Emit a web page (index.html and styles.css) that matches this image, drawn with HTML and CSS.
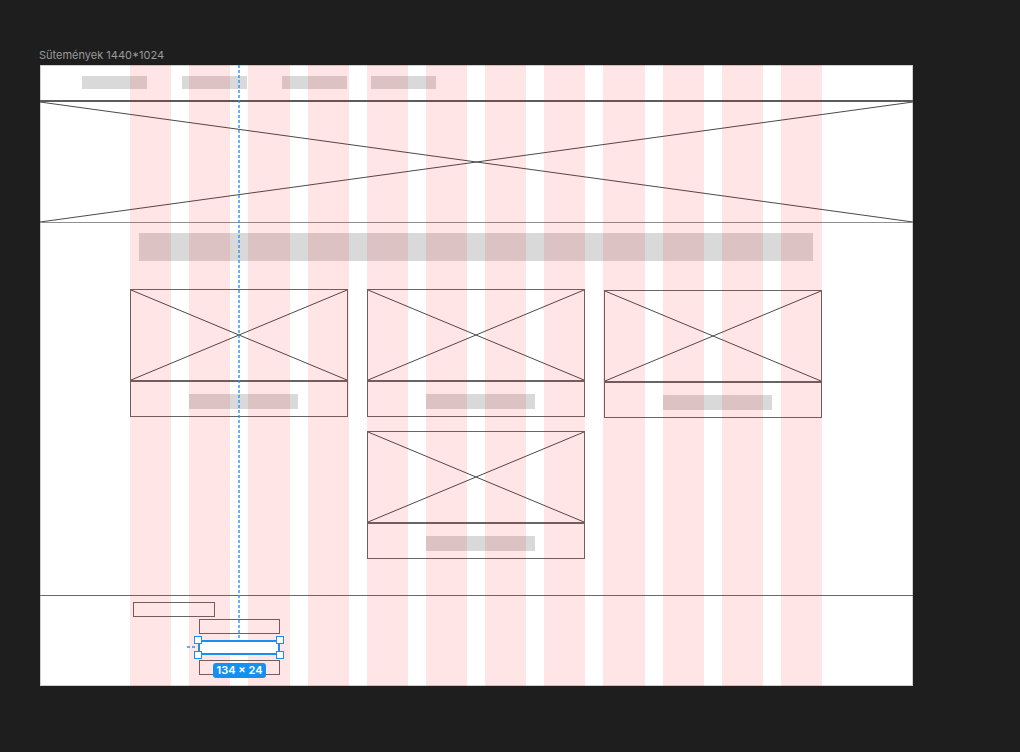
FILE: index.html
```html
<!DOCTYPE html>
<html lang="hu">
<head>
<meta charset="utf-8">
<title>Sütemények</title>
<link rel="stylesheet" href="styles.css">
</head>
<body>
<div class="canvas">
  <div class="frame-label">Sütemények 1440*1024</div>
  <div class="frame">
    <header class="nav">
      <span class="nav-item"></span>
      <span class="nav-item"></span>
      <span class="nav-item"></span>
      <span class="nav-item nav-item-last"></span>
    </header>
    <section class="hero">
      <svg class="xbox" viewBox="0 0 100 100" preserveAspectRatio="none"><line x1="0" y1="0" x2="100" y2="100" vector-effect="non-scaling-stroke"/><line x1="0" y1="100" x2="100" y2="0" vector-effect="non-scaling-stroke"/></svg>
    </section>
    <main class="content">
      <div class="title-bar"></div>
      <div class="cards">
        <div class="card">
          <div class="card-img"><svg class="xbox" viewBox="0 0 100 100" preserveAspectRatio="none"><line x1="0" y1="0" x2="100" y2="100" vector-effect="non-scaling-stroke"/><line x1="0" y1="100" x2="100" y2="0" vector-effect="non-scaling-stroke"/></svg></div>
          <div class="card-caption"><span class="caption-bar"></span></div>
        </div>
        <div class="card">
          <div class="card-img"><svg class="xbox" viewBox="0 0 100 100" preserveAspectRatio="none"><line x1="0" y1="0" x2="100" y2="100" vector-effect="non-scaling-stroke"/><line x1="0" y1="100" x2="100" y2="0" vector-effect="non-scaling-stroke"/></svg></div>
          <div class="card-caption"><span class="caption-bar"></span></div>
        </div>
        <div class="card card-shift">
          <div class="card-img"><svg class="xbox" viewBox="0 0 100 100" preserveAspectRatio="none"><line x1="0" y1="0" x2="100" y2="100" vector-effect="non-scaling-stroke"/><line x1="0" y1="100" x2="100" y2="0" vector-effect="non-scaling-stroke"/></svg></div>
          <div class="card-caption"><span class="caption-bar"></span></div>
        </div>
        <div class="card card-middle">
          <div class="card-img"><svg class="xbox" viewBox="0 0 100 100" preserveAspectRatio="none"><line x1="0" y1="0" x2="100" y2="100" vector-effect="non-scaling-stroke"/><line x1="0" y1="100" x2="100" y2="0" vector-effect="non-scaling-stroke"/></svg></div>
          <div class="card-caption"><span class="caption-bar"></span></div>
        </div>
      </div>
    </main>
    <footer class="footer">
      <span class="f-rect f-rect-1"></span>
      <span class="f-rect f-rect-2"></span>
      <span class="f-rect f-rect-3"></span>
      <span class="f-rect f-rect-4"></span>
    </footer>
    <div class="layout-grid">
      <span></span><span></span><span></span><span></span><span></span><span></span>
      <span></span><span></span><span></span><span></span><span></span><span></span>
    </div>
    <svg class="guide-v" width="2" height="575"><line x1="1" y1="0" x2="1" y2="575"/></svg>
    <svg class="guide-h" width="10" height="2"><line x1="0" y1="1" x2="10" y2="1"/></svg>
    <div class="selection">
      <i class="handle handle-tl"></i><i class="handle handle-tr"></i>
      <i class="handle handle-bl"></i><i class="handle handle-br"></i>
    </div>
    <div class="size-badge">134 × 24</div>
  </div>
</div>
</body>
</html>
```

FILE: styles.css
```css
* { box-sizing: border-box; }
html, body { margin: 0; padding: 0; }
body {
  background: #1e1e1e;
  font-family: Inter, "Noto Sans", "Liberation Sans", sans-serif;
  width: 1020px;
  height: 752px;
  overflow: hidden;
}
.canvas { padding: 48px 0 0 40px; }
.frame-label {
  color: #9a9a9a;
  font-size: 11px;
  line-height: 14px;
  margin: 0 0 3px -1px;
}
.frame {
  position: relative;
  width: 873px;
  height: 621px;
  background: #fff;
  display: flex;
  flex-direction: column;
  box-shadow: inset 0 0 0 1px #cfcfcf;
}
.nav {
  flex-shrink: 0;
  height: 35px;
  display: flex;
  align-items: flex-start;
  gap: 35px;
  padding: 11px 0 0 42px;
}
.nav-item { width: 65px; height: 13px; background: #d9d9d9; }
.nav-item-last { margin-left: -11px; }
.hero {
  flex-shrink: 0;
  height: 123px;
  border-top: 2px solid #5c5c5c;
  border-bottom: 1px solid #909090;
}
.xbox { display: block; width: 100%; height: 100%; }
.xbox line { stroke: #4a4a4a; stroke-width: 1; }
.content { flex: 1; padding-top: 10px; }
.title-bar { width: 674px; height: 28px; margin-left: 99px; background: #d9d9d9; }
.cards {
  display: grid;
  grid-template-columns: repeat(3, 218px);
  column-gap: 19px;
  row-gap: 13px;
  margin: 28px 0 0 90px;
  align-items: start;
}
.card-shift { margin-top: 1px; }
.card-middle { grid-column: 2; }
.card-img { height: 92px; border: 1px solid #666; }
.card-caption {
  height: 36px;
  border: 1px solid #666;
  padding: 12px 0 0 58px;
}
.caption-bar { display: block; width: 109px; height: 15px; background: #d9d9d9; }
.footer {
  flex-shrink: 0;
  height: 91px;
  border-top: 1px solid #6a6a6a;
  padding-top: 6px;
  display: flex;
  flex-direction: column;
  align-items: flex-start;
}
.f-rect { display: block; height: 15px; border: 1px solid #666; }
.f-rect-1 { width: 82px; margin-left: 93px; }
.f-rect-2 { width: 81px; margin-left: 159px; margin-top: 2px; }
.f-rect-3 { width: 81px; margin-left: 159px; margin-top: 6px; }
.f-rect-4 { width: 81px; margin-left: 159px; margin-top: 5px; }
.layout-grid {
  position: absolute;
  inset: 0;
  display: grid;
  grid-template-columns: repeat(12, 1fr);
  column-gap: 18px;
  padding: 0 91px 0 90px;
  pointer-events: none;
}
.layout-grid span { background: rgba(255, 0, 0, 0.1); }
.guide-v {
  position: absolute;
  left: 198px;
  top: 0;
  display: block;
}
.guide-h {
  position: absolute;
  left: 147px;
  top: 581px;
  display: block;
}
.guide-v line, .guide-h line {
  stroke: #2b93f2;
  stroke-width: 1.4;
  stroke-dasharray: 3 2;
}
.selection {
  position: absolute;
  left: 158px;
  top: 575px;
  width: 82px;
  height: 15px;
  border: 2px solid #1b8ef0;
  background: #fff;
}
.handle {
  position: absolute;
  width: 8px;
  height: 8px;
  background: #fff;
  border: 1px solid #1b8ef0;
}
.handle-tl { left: -6px; top: -6px; }
.handle-tr { right: -6px; top: -6px; }
.handle-bl { left: -6px; bottom: -6px; }
.handle-br { right: -6px; bottom: -6px; }
.size-badge {
  position: absolute;
  left: 173px;
  top: 598px;
  width: 53px;
  height: 15px;
  border-radius: 3px;
  background: #1490f0;
  color: #fff;
  font-size: 11px;
  font-weight: 600;
  line-height: 15px;
  text-align: center;
}
```
